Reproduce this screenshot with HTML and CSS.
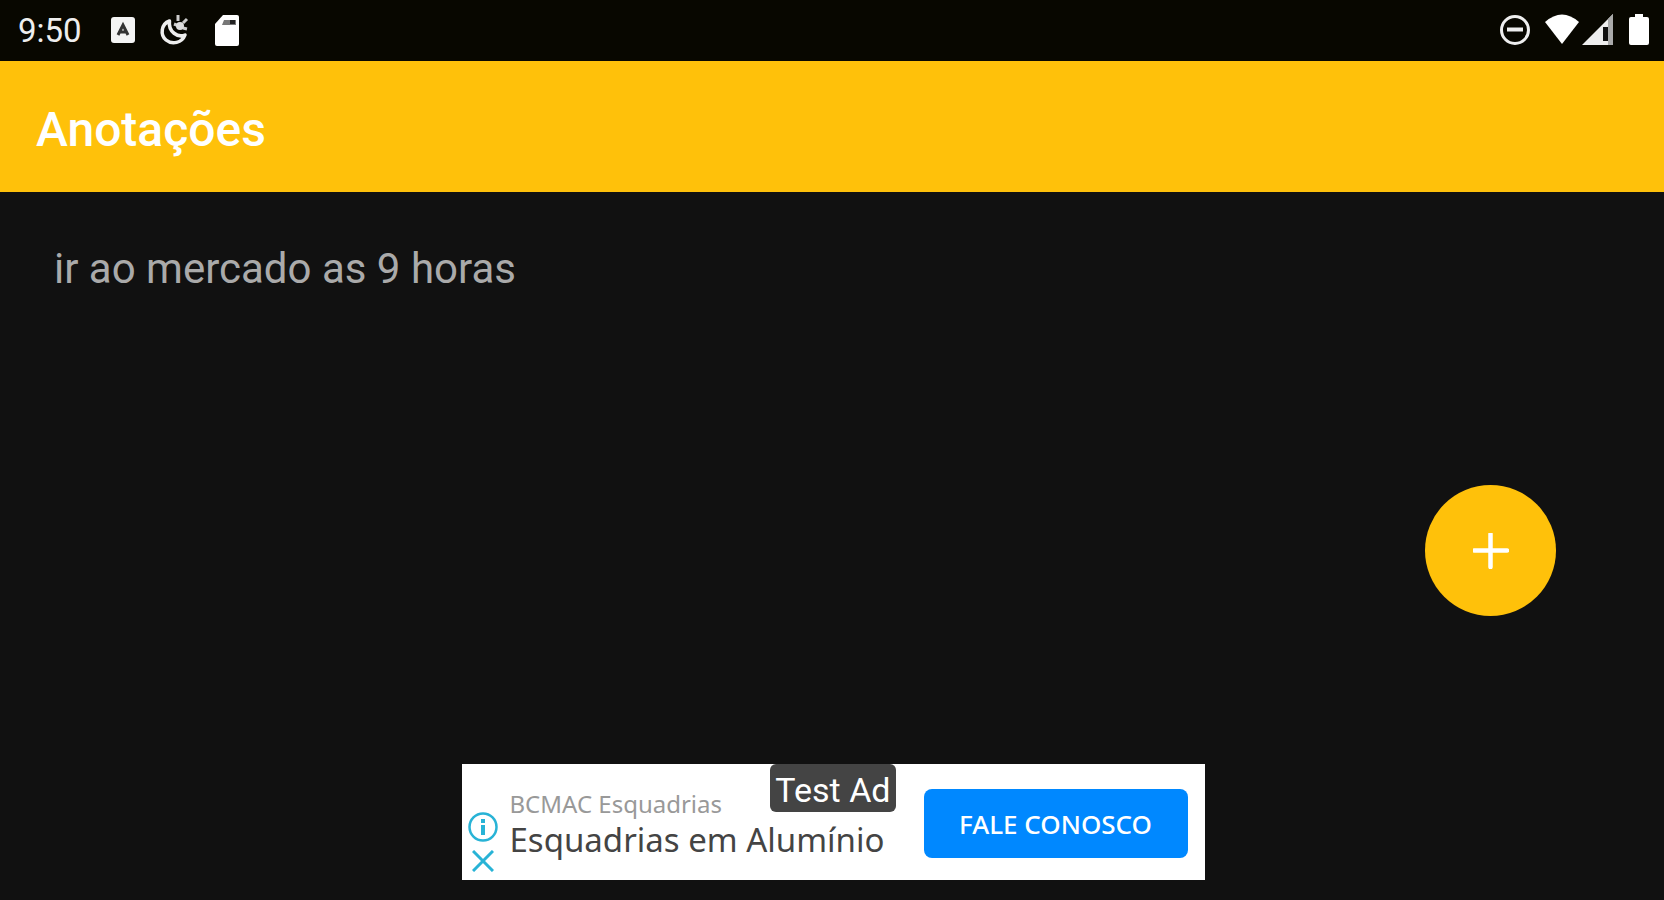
FILE: index.html
```html
<!DOCTYPE html>
<html lang="pt-BR">
<head>
<meta charset="utf-8">
<meta name="viewport" content="width=device-width, initial-scale=1">
<title>Anotações</title>
<link rel="stylesheet" href="styles.css">
</head>
<body>
<div class="status-bar">
  <div class="status-left">
    <time class="clock">9:50</time>
    <svg class="status-icon" width="26" height="28" viewBox="0 0 26 28" aria-hidden="true">
      <rect x="1" y="1" width="24" height="26" rx="3" fill="#f4f4f4"/>
      <path d="M8 19 13 9l5 10M10 16h6" fill="none" stroke="#333" stroke-width="3"/>
    </svg>
    <svg class="status-icon" width="32" height="32" viewBox="0 0 32 32" aria-hidden="true">
      <path d="M10.500 7C2 10 1 21 7 26s16 3 19-5c-7 3-17-3-15.500-14z" fill="none" stroke="#eee" stroke-width="3.500" stroke-linejoin="round"/>
      <path d="M19 1v6M28 5l-4 4M15 10l5 2M28 15l-4-1" stroke="#ccc" stroke-width="3"/>
      <circle cx="21" cy="12" r="4" fill="#ddd"/>
    </svg>
    <svg class="status-icon" width="26" height="32" viewBox="0 0 26 32" aria-hidden="true">
      <path d="M9 1h14a2 2 0 0 1 2 2v27a2 2 0 0 1-2 2H3a2 2 0 0 1-2-2V10z" fill="#fff"/>
      <path d="M10 6h12v5H8z" fill="#777"/>
      <path d="M16 6h5v4h-5z" fill="#222"/>
    </svg>
  </div>
  <div class="status-right">
    <svg width="32" height="32" viewBox="0 0 32 32" aria-hidden="true">
      <circle cx="16" cy="16" r="13.500" fill="none" stroke="#eee" stroke-width="3"/>
      <path d="M8 15.500h16" stroke="#eee" stroke-width="4"/>
    </svg>
    <svg class="wifi" width="34" height="32" viewBox="0 0 34 32" aria-hidden="true">
      <path d="M0 8Q17-7 34 8L17 30z" fill="#fff"/>
    </svg>
    <svg width="34" height="32" viewBox="0 0 34 32" aria-hidden="true">
      <path d="M1 31 32 0v31z" fill="#eee"/>
      <path d="M22 13h5v14h-5z" fill="#111"/>
      <path d="M27 5l5-5v31h-5z" fill="#aaa"/>
    </svg>
    <svg class="battery" width="20" height="32" viewBox="0 0 20 32" aria-hidden="true">
      <path d="M6 0h8v3h4a2 2 0 0 1 2 2v24a2 2 0 0 1-2 2H2a2 2 0 0 1-2-2V5a2 2 0 0 1 2-2h4z" fill="#fff"/>
    </svg>
  </div>
</div>
<header class="app-bar"><h1>Anotações</h1></header>
<main class="notes">
  <ul class="note-list">
    <li>ir ao mercado as 9 horas</li>
  </ul>
  <button class="fab" type="button" aria-label="Adicionar anotação">
    <svg width="36" height="36" viewBox="0 0 36 36" aria-hidden="true">
      <path d="M17.500 1v33M1 17.500h33" stroke="#fff" stroke-width="4.500" stroke-linecap="round"/>
    </svg>
  </button>
</main>
<aside class="ad">
  <div class="ad-controls">
    <button type="button" aria-label="Informações do anúncio">
      <svg width="30" height="30" viewBox="0 0 30 30" aria-hidden="true">
        <circle cx="15" cy="15" r="13.500" fill="none" stroke="#28b3d6" stroke-width="2.500"/>
        <path d="M15 7v4M15 13v10" stroke="#28b3d6" stroke-width="4"/>
      </svg>
    </button>
    <button type="button" aria-label="Fechar anúncio">
      <svg width="22" height="22" viewBox="0 0 22 22" aria-hidden="true">
        <path d="M1 1l20 20M21 1 1 21" stroke="#28b3d6" stroke-width="3"/>
      </svg>
    </button>
  </div>
  <div class="ad-text">
    <p class="advertiser">BCMAC Esquadrias</p>
    <p class="headline">Esquadrias em Alumínio</p>
    <span class="test-label">Test Ad</span>
  </div>
  <button class="cta" type="button">FALE CONOSCO</button>
</aside>
</body>
</html>
```
FILE: styles.css
```css
* {
  box-sizing: border-box;
}

body {
  margin: 0;
  min-height: 100vh;
  display: flex;
  flex-direction: column;
  background: #111;
  font-family: Roboto, sans-serif;
}

h1,
p,
ul {
  margin: 0;
  padding: 0;
}

button {
  border: 0;
  padding: 0;
  background: none;
  font: inherit;
  cursor: pointer;
}

svg {
  display: block;
}

.status-bar {
  height: 61px;
  padding: 0 15px 2px 18px;
  display: flex;
  align-items: center;
  justify-content: space-between;
  background: #080700;
}

.status-left,
.status-right {
  display: flex;
  align-items: center;
}

.status-left {
  gap: 23px;
}

.clock {
  margin-right: 5px;
  padding-top: 2px;
  color: #eee;
  font-size: 33px;
  line-height: 40px;
}

.status-right {
  gap: 2px;
}

.wifi {
  margin-left: 12px;
}

.battery {
  margin-left: 12px;
}

.app-bar {
  height: 131px;
  padding: 6px 36px 0;
  display: flex;
  align-items: center;
  background: #ffc10a;
}

.app-bar h1 {
  color: #fff;
  font-size: 48px;
  font-weight: 500;
  line-height: 56px;
}

.notes {
  position: relative;
  flex: 1;
  padding: 49px 54px;
}

.note-list {
  list-style: none;
  color: #aaa;
  font-size: 42px;
  line-height: 56px;
}

.fab {
  position: absolute;
  right: 108px;
  bottom: 148px;
  width: 131px;
  height: 131px;
  display: grid;
  place-items: center;
  border-radius: 50%;
  background: #ffc10a;
}

.ad {
  align-self: center;
  height: 116px;
  margin: 0 0 20px 2px;
  padding: 0 17px 0 6px;
  display: flex;
  align-items: center;
  background: #fff;
  font-family: "Noto Sans", sans-serif;
}

.ad-controls {
  align-self: flex-end;
  display: flex;
  flex-direction: column;
  align-items: center;
  gap: 8px;
  padding-bottom: 8px;
}

.ad-text {
  position: relative;
  align-self: stretch;
  width: 398px;
  padding: 24px 0 0 12px;
}

.advertiser {
  color: #999;
  font-size: 24px;
  line-height: 32px;
}

.headline {
  color: #444;
  font-size: 33px;
  line-height: 40px;
  white-space: nowrap;
}

.test-label {
  position: absolute;
  top: 0;
  right: 0;
  padding: 4px 5px 0;
  border-radius: 6px;
  background: #444;
  color: #fff;
  font-family: Roboto, sans-serif;
  font-size: 34px;
  line-height: 44px;
  white-space: nowrap;
}

.cta {
  width: 264px;
  height: 69px;
  margin: 3px 0 0 28px;
  border-radius: 8px;
  background: #0088ff;
  color: #fff;
  font-size: 26px;
  font-weight: 500;
}
```
